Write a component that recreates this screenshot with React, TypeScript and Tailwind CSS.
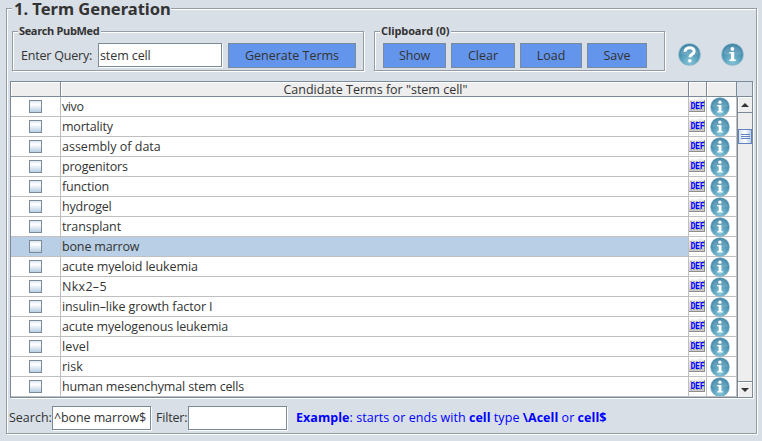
import type { ReactNode } from "react";

const ETCHED = "border border-[#959ca2] shadow-[1px_1px_0_#fff,inset_1px_1px_0_#fff]";

const terms: [string, string][] = [
  ["vivo", "tracking-[-0.4px]"],
  ["mortality", "tracking-[-0.2px]"],
  ["assembly of data", "tracking-normal"],
  ["progenitors", "tracking-[-0.2px]"],
  ["function", "tracking-[-0.15px]"],
  ["hydrogel", "tracking-[-0.2px]"],
  ["transplant", "tracking-[-0.1px]"],
  ["bone marrow", "tracking-[-0.15px]"],
  ["acute myeloid leukemia", "tracking-[-0.1px]"],
  ["Nkx2–5", "tracking-[0.3px]"],
  ["insulin–like growth factor I", "tracking-[-0.1px]"],
  ["acute myelogenous leukemia", "tracking-[-0.14px]"],
  ["level", "tracking-[0.15px]"],
  ["risk", "tracking-normal"],
  ["human mesenchymal stem cells", "tracking-[-0.15px]"],
];

function Orb({ size, kind }: { size: number; kind: "i" | "?" }) {
  return (
    <svg width={size} height={size} viewBox="0 0 22 22" className="block shrink-0">
      <defs>
        <radialGradient id="orb" cx="0.5" cy="0.85" r="0.8">
          <stop offset="0" stopColor="#86c6d8" />
          <stop offset="0.55" stopColor="#559cba" />
          <stop offset="1" stopColor="#377fa3" />
        </radialGradient>
      </defs>
      <circle cx="11" cy="11" r="10.8" fill="#8db6c9" />
      <circle cx="11" cy="11" r="10" fill="url(#orb)" />
      <path d="M2.2 10.5a8.8 8.5 0 0 1 17.6 0Q11 13 2.2 10.5z" fill="#fff" opacity="0.13" />
      {kind === "i" ? (
        <g fill="#fff">
          <circle cx="10.9" cy="5.7" r="1.8" />
          <path d="M7.9 8.7h4.7v7h1.6v1.4H7.9v-1.4h1.6v-5.6H7.9z" />
        </g>
      ) : (
        <g fill="none" stroke="#fff">
          <path d="M6.8 8.4C6.3 3.6 15.5 3.3 15.5 7.8c0 3-4.1 2.9-4.1 5.8" strokeWidth="2.9" />
          <circle cx="11.3" cy="17" r="1.7" fill="#fff" stroke="none" />
        </g>
      )}
    </svg>
  );
}

function DefIcon() {
  return (
    <svg width="17" height="19" viewBox="0 0 17 19" className="block shrink-0">
      <defs>
        <linearGradient id="def" x1="0" y1="0" x2="0" y2="1">
          <stop offset="0" stopColor="#f4f4f4" />
          <stop offset="1" stopColor="#c8c8c8" />
        </linearGradient>
      </defs>
      <path d="M0 2.5h9l2.5-2.5 2.5 2.5h2v12H0z" fill="url(#def)" />
      <path d="M1 4.5h14M1 12.5h13" stroke="#b0b0b0" strokeDasharray="2 1" />
      <path d="M0 14.5h16M15.5 3v12" stroke="#8e8e8e" />
      <path d="M0 17.5h16" stroke="#ededed" strokeDasharray="2 1" />
      <text x="1.4" y="11.5" fontFamily="DejaVu Sans Mono" fontWeight="700" fontSize="8.3" textLength="14.4" lengthAdjust="spacing" fill="#0000ff">DEF</text>
    </svg>
  );
}

function Group({ title, titleClass, className, children }: { title: string; titleClass: string; className: string; children: ReactNode }) {
  return (
    <section className={`h-10 shrink-0 ${ETCHED} ${className}`}>
      <h2 className={`-mt-[7px] ml-[5px] h-3 bg-[#d8dfe7] pl-px text-[11px] font-bold leading-3 ${titleClass}`}>{title}</h2>
      <div className="mt-1.5 flex">{children}</div>
    </section>
  );
}

function Button({ label, className }: { label: string; className: string }) {
  return (
    <button className={`h-[25px] shrink-0 border border-[#7a8a99] bg-[#6495ed] leading-[23px] ${className}`}>{label}</button>
  );
}

function Field({ text, className }: { text: string; className: string }) {
  return (
    <div className={`shrink-0 border border-[#7a8a99] bg-white shadow-[1px_1px_0_#fff] ${className}`}>{text}</div>
  );
}

const HEAD = "h-full bg-[#eee] shadow-[inset_1px_1px_0_#fff]";

export default function App() {
  return (
    <main className="h-[441px] w-[762px] overflow-hidden whitespace-nowrap bg-[#d8dfe7] pl-1.5 pt-2 font-['Open_Sans','Noto_Sans',sans-serif] text-[12.5px] text-[#333]">
      <div className={`h-[426px] w-[751px] ${ETCHED}`}>
        <h1 className="-mt-[9px] ml-[5px] h-[18px] w-[159px] bg-[#d8dfe7] pl-0.5 font-['Noto_Sans',sans-serif] text-[16.5px] font-bold leading-[18px]">1. Term Generation</h1>

        <div className="mt-[13px] flex pl-[5px]">
          <Group title="Search PubMed" titleClass="w-[83px] pl-0.5 tracking-[-0.35px]" className="w-[352px]">
            <span className="ml-2 w-[77px] leading-[25px] tracking-[-0.2px]">Enter Query:</span>
            <Field text="stem cell" className="h-6 w-[124px] pl-px leading-[23px] tracking-[-0.1px]" />
            <Button label="Generate Terms" className="ml-1.5 w-32" />
          </Group>
          <Group title="Clipboard (0)" titleClass="w-[71px] tracking-[-0.1px]" className="ml-2.5 w-[291px]">
            <Button label="Show" className="ml-2 w-[63px] tracking-[-0.2px]" />
            <Button label="Clear" className="ml-[5px] w-16" />
            <Button label="Load" className="ml-[5px] w-[62px]" />
            <Button label="Save" className="ml-[5px] w-[60px]" />
          </Group>
          <div className="ml-[13px] mt-3 flex gap-5">
            <Orb size={23} kind="?" />
            <Orb size={23} kind="i" />
          </div>
        </div>

        <div className="ml-[3px] mt-2.5 h-[317px] w-[743px] border border-[#7a8a99] shadow-[1px_1px_0_#fff]">
          <div className="flex h-[15px] border-b border-[#7a8a99] text-center leading-[15px]">
            <div className={`w-[49px] ${HEAD}`} />
            <div className={`w-[629px] border-x border-[#7a8a99] pl-0.5 ${HEAD}`}>Candidate Terms for "stem cell"</div>
            <div className={`w-[17px] ${HEAD}`} />
            <div className={`w-[31px] border-x border-[#7a8a99] ${HEAD}`} />
          </div>
          <div className="flex h-[300px]">
            <div className="w-[726px]">
              {terms.map(([term, tracking]) => (
                <div key={term} className={`flex h-5 border-b border-[#c0c0c0] ${term === "bone marrow" ? "bg-[#b8cfe5]" : "bg-white"}`}>
                  <div className="w-[49px] pl-[18px] pt-[3px]">
                    <div className="size-[13px] border border-[#7a8a99] bg-linear-to-b from-[#dde8f3] via-white via-30% to-[#b8cfe5]" />
                  </div>
                  <div className={`w-[629px] border-x border-[#c0c0c0] pl-px leading-[19px] ${tracking}`}>{term}</div>
                  <div className="w-[17px] bg-white"><DefIcon /></div>
                  <div className="flex w-[31px] justify-center border-x border-[#c0c0c0] bg-white pr-[3px]"><Orb size={20} kind="i" /></div>
                </div>
              ))}
            </div>
            <div className="flex w-[15px] flex-col border-l border-[#7a8a99] bg-[#eee]">
              <div className="flex h-[15px] items-center justify-center shadow-[inset_1px_1px_0_#fff]">
                <div className="border-x-4 border-b-4 border-x-transparent border-b-[#333]" />
              </div>
              <div className="h-[17px] border-t border-[#7a8a99]" />
              <div className="flex h-[15px] flex-col items-center justify-center gap-px border border-[#6382bf] bg-linear-to-r from-[#d0e0ef] via-white to-[#b8cfe5]">
                <i className="h-px w-[9px] bg-[#6382bf]" />
                <i className="h-px w-[9px] bg-[#6382bf]" />
                <i className="h-px w-[9px] bg-[#6382bf]" />
              </div>
              <div className="flex-1 border-b border-[#7a8a99]" />
              <div className="flex h-[15px] items-center justify-center shadow-[inset_1px_1px_0_#fff]">
                <div className="border-x-4 border-t-4 border-x-transparent border-t-[#333]" />
              </div>
            </div>
          </div>
        </div>

        <div className="mt-2 flex leading-[23px]">
          <span className="ml-0.5 w-[43px]">Search:</span>
          <Field text="^bone marrow$" className="h-6 w-[99px] pl-px leading-[22px] tracking-[-0.1px]" />
          <span className="ml-[5px] w-8 tracking-[-0.2px]">Filter:</span>
          <Field text="" className="h-6 w-[99px]" />
          <p className="ml-[9px] tracking-[0.05px] text-[#0000ff]"><b>Example</b>: starts or ends with <b>cell</b> type <b>\Acell</b> or <b>cell$</b></p>
        </div>
      </div>
    </main>
  );
}
